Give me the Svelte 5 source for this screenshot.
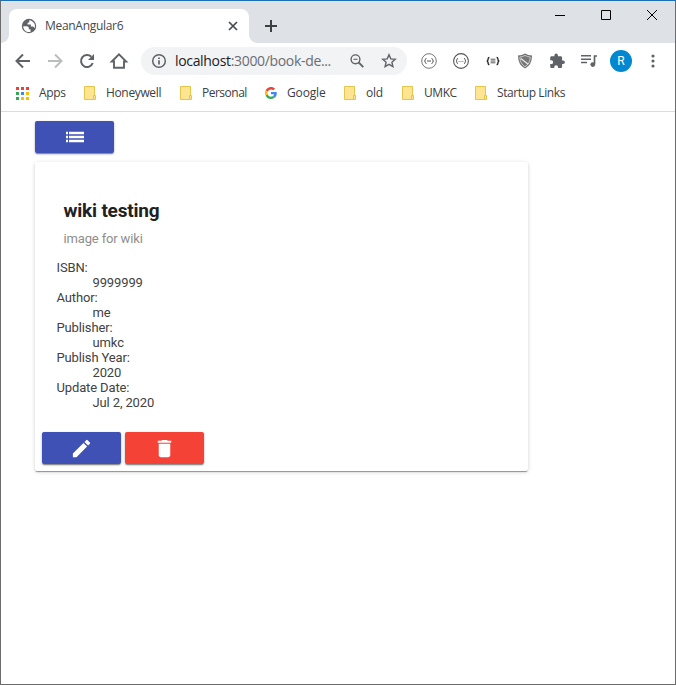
<script>
  const bookmarks = [
    { label: 'Apps', icon: 'apps', width: 68, spacing: -0.35 },
    { label: 'Honeywell', icon: 'folder', width: 96, spacing: -0.35 },
    { label: 'Personal', icon: 'folder', width: 85, spacing: -0.5 },
    { label: 'Google', icon: 'google', width: 79, spacing: -0.15 },
    { label: 'old', icon: 'folder', width: 58, spacing: -0.2 },
    { label: 'UMKC', icon: 'folder', width: 73, spacing: -0.45 },
    { label: 'Startup Links', icon: 'folder', width: 100, spacing: -0.4 }
  ];
  const dots = ['#ea4335', '#ea4335', '#ea4335', '#34a853', '#4285f4', '#fbbc05', '#34a853', '#fbbc05', '#fbbc05'];
  const details = [
    ['ISBN:', '9999999'],
    ['Author:', 'me'],
    ['Publisher:', 'umkc'],
    ['Publish Year:', '2020'],
    ['Update Date:', 'Jul 2, 2020']
  ];
</script>

<div class="window">
  <header class="titlebar">
    <div class="tab">
      <svg class="globe" width="16" height="16" viewBox="0 0 16 16">
        <circle cx="8" cy="8" r="7.2" fill="#5f6368" />
        <path d="M2.2 8.2h3.400c1.500 0 2.200.9 2.200 1.900v1.200h1.700v2.600c-3.600.9-7.100-1.700-7.300-5.700z" fill="#fff" />
        <path d="M8.300 2.200v1.200c0 1-.8 1.400-1.700 1.400v1.700h3.300v2h2.200l1.700 1.600c1-3.900-1.300-7.400-5.500-7.900z" fill="#fff" />
      </svg>
      <span class="tabname">MeanAngular6</span>
      <svg width="10" height="10" viewBox="0 0 10 10"><path d="M1 1l8 8M9 1l-8 8" stroke="#45494d" stroke-width="1.7" /></svg>
    </div>
    <svg class="plus" width="14" height="14" viewBox="0 0 14 14"><path d="M7 1v12M1 7h12" stroke="#3c4043" stroke-width="2" /></svg>
    <div class="controls">
      <svg width="46" height="28" viewBox="0 0 46 28"><path d="M18 14.500h10" stroke="#000" /></svg>
      <svg width="46" height="28" viewBox="0 0 46 28"><path d="M18.500 9.500h9v9h-9z" stroke="#000" fill="none" /></svg>
      <svg width="46" height="28" viewBox="0 0 46 28"><path d="M18 9l10 10M28 9l-10 10" stroke="#000" /></svg>
    </div>
  </header>

  <nav class="toolbar">
    <svg class="tool" viewBox="-16 -16 32 32"><path d="M7 0H-6M0-6.500L-6.500 0 0 6.500" stroke="#5f6368" stroke-width="2" fill="none" /></svg>
    <svg class="tool" viewBox="-16 -16 32 32"><path d="M-7 0H6M0-6.500L6.500 0 0 6.500" stroke="#babcbe" stroke-width="2" fill="none" /></svg>
    <svg class="tool" viewBox="-16 -16 32 32"><path d="M5.700 2A6 6 0 1 1 4.300-4.200" stroke="#5f6368" stroke-width="2" fill="none" /><path d="M7-7v6H1z" fill="#5f6368" /></svg>
    <svg class="tool" viewBox="-16 -16 32 32"><path d="M-7.200.5L0-6.700 7.200.5H5v6.300H-5V.5z" stroke="#5f6368" stroke-width="1.900" fill="none" /></svg>
    <div class="address">
      <svg width="16" height="16" viewBox="-8 -8 16 16"><circle r="6.300" fill="none" stroke="#5f6368" stroke-width="1.500" /><path d="M0-3.600v1.600M0-.8v4.300" stroke="#5f6368" stroke-width="1.700" /></svg>
      <span class="url"><b>localhost</b>:3000/book-de...</span>
      <svg width="16" height="16" viewBox="-8 -8 16 16"><circle cx="-1.500" cy="-1.700" r="4.400" fill="none" stroke="#5f6368" stroke-width="1.400" /><path d="M1.700 1.500L6.300 6.100" stroke="#5f6368" stroke-width="1.800" /><path d="M-3.500-1.700h4" stroke="#5f6368" stroke-width="1.100" /></svg>
      <svg class="star" width="16" height="16" viewBox="-8 -8 16 16"><path d="M0-6.200l1.800 4.100 4.400.4-3.300 2.900 1 4.400L0 3.300l-3.900 2.300 1-4.400-3.300-2.900 4.400-.4z" fill="none" stroke="#5f6368" stroke-width="1.400" /></svg>
    </div>
    <svg class="tool" viewBox="-16 -16 32 32"><circle r="7.300" fill="#fff" stroke="#777" stroke-width="1" /><path d="M-2.500-2.500q-1.200 0-1.200 1.200Q-3.700 0-4.500 0q.8 0 .8 1.300Q-3.700 2.500-2.500 2.500M2.500-2.500q1.200 0 1.200 1.200Q3.700 0 4.500 0 3.700 0 3.700 1.300 3.700 2.500 2.500 2.500M-2 0h4" fill="none" stroke="#555" stroke-width="1" /></svg>
    <svg class="tool" viewBox="-16 -16 32 32"><circle r="7.400" fill="#fff" stroke="#555" stroke-width="1.100" /><path d="M-3-2.500q-1.200 0-1.200 1.200Q-4.200 0-5 0q.8 0 .8 1.300Q-4.200 2.500-3 2.500M3-2.500q1.200 0 1.200 1.200Q4.200 0 5 0 4.200 0 4.200 1.300 4.200 2.500 3 2.500" fill="none" stroke="#555" stroke-width="1" /><path d="M-2.500.5h1.200M-.6.5H.6M1.300.5h1.200" stroke="#999" /></svg>
    <svg class="tool" viewBox="-16 -16 32 32"><path d="M-3.600-3.500q-1.300 0-1.300 1.300Q-4.900 0-6.300 0q1.400 0 1.400 2.200 0 1.300 1.300 1.300M3.600-3.500q1.300 0 1.300 1.300Q4.900 0 6.300 0 4.900 0 4.900 2.200 4.900 3.500 3.600 3.500" fill="none" stroke="#222" stroke-width="1.300" /><path d="M-2.400-1.800h4.800M-2.400 0h4.800M-2.400 1.800h4.800" stroke="#444" stroke-width=".9" /></svg>
    <svg class="tool" viewBox="-16 -16 32 32"><path d="M0-7.500Q3-5.600 7-5.500 7 4 0 7.500-7 4-7-5.500-3-5.600 0-7.500z" fill="#707070" /><path d="M0-5.600Q2.500-4.200 5.200-4 5 3 0 5.700-5 3-5.200-4-2.500-4.200 0-5.600z" fill="#777" stroke="#ddd" stroke-width=".8" /><path d="M-4.200-2.500L3.200 3.300" stroke="#e8e8e8" stroke-width="1.300" /></svg>
    <svg class="tool" viewBox="-16 -16 32 32"><path transform="translate(-8.200 -8.300) scale(.7)" d="M20.500 11H19V7c0-1.100-.9-2-2-2h-4V3.500a2.500 2.500 0 0 0-5 0V5H4c-1.100 0-2 .9-2 2v3.800h1.500a2.700 2.700 0 0 1 0 5.400H2V20c0 1.100.9 2 2 2h3.800v-1.500a2.700 2.700 0 0 1 5.400 0V22H17c1.100 0 2-.9 2-2v-4h1.500a2.500 2.500 0 0 0 0-5z" fill="#5f6368" /></svg>
    <svg class="tool" viewBox="-16 -16 32 32"><path d="M-8-5.200H2M-8-1.800H2M-8 1.600h6" stroke="#5f6368" stroke-width="1.500" /><path d="M8-5H5.500v8" fill="none" stroke="#5f6368" stroke-width="1.700" /><circle cx="3.800" cy="3.600" r="2.400" fill="#5f6368" /></svg>
    <span class="tool avatar"><i>R</i></span>
    <svg class="tool" viewBox="-16 -16 32 32" fill="#5f6368"><circle cy="-5" r="1.600" /><circle r="1.600" /><circle cy="5" r="1.600" /></svg>
  </nav>

  <div class="bookmarks">
    {#each bookmarks as mark}
      <div class="bookmark" style:width="{mark.width}px">
        {#if mark.icon === 'apps'}
          <svg width="13" height="13" viewBox="0 0 13 13">
            {#each dots as color, i}<rect x={(i % 3) * 5} y={Math.floor(i / 3) * 5} width="3" height="3" fill={color} />{/each}
          </svg>
        {:else if mark.icon === 'google'}
          <svg width="12" height="12" viewBox="0 0 48 48">
            <path fill="#ea4335" d="M24 9.500c3.500 0 6.700 1.200 9.200 3.600l6.900-6.900C35.900 2.400 30.500 0 24 0 14.600 0 6.500 5.400 2.600 13.200l8 6.200C12.400 13.700 17.700 9.500 24 9.500z" />
            <path fill="#4285f4" d="M47 24.600c0-1.600-.2-3.100-.4-4.600H24v9h12.900c-.6 3-2.200 5.500-4.700 7.200l7.700 6C44.400 38 47 31.800 47 24.600z" />
            <path fill="#fbbc05" d="M10.500 28.600a14 14 0 0 1 0-9.200l-8-6.200a24 24 0 0 0 0 21.600z" />
            <path fill="#34a853" d="M24 48c6.500 0 11.900-2.100 15.900-5.800l-7.700-6c-2.200 1.500-4.900 2.300-8.200 2.300-6.300 0-11.600-4.200-13.500-9.900l-8 6.200C6.500 42.600 14.600 48 24 48z" />
          </svg>
        {:else}
          <svg width="12" height="14" viewBox="0 0 12 14"><path d="M.5.500h10v13H.5z" fill="#ffe592" stroke="#e6c54b" /><path d="M9.500 9.500h2v4h-2z" fill="#ffe592" stroke="#e6c54b" /></svg>
        {/if}
        <span style:letter-spacing="{mark.spacing}px">{mark.label}</span>
      </div>
    {/each}
  </div>

  <main>
    <button class="primary" aria-label="Book list">
      <svg width="20" height="20" viewBox="0 0 20 20"><path d="M1 6h2M4 6h15M1 10h2M4 10h15M1 14h2M4 14h15" stroke="#fff" stroke-width="2.300" /></svg>
    </button>
    <section class="card">
      <h2>wiki testing</h2>
      <p>image for wiki</p>
      <dl>
        {#each details as [term, value]}
          <dt>{term}</dt>
          <dd>{value}</dd>
        {/each}
      </dl>
      <div class="actions">
        <button class="primary" aria-label="Edit">
          <svg width="23" height="23" viewBox="0 0 24 24"><path fill="#fff" d="M3 17.250V21h3.750L17.810 9.940l-3.750-3.750L3 17.250zM20.710 7.040a1 1 0 0 0 0-1.410l-2.340-2.340a1 1 0 0 0-1.410 0l-1.830 1.830 3.750 3.750 1.830-1.830z" /></svg>
        </button>
        <button class="warn" aria-label="Delete">
          <svg width="23" height="23" viewBox="0 0 24 24"><path fill="#fff" d="M6 19c0 1.100.9 2 2 2h8c1.100 0 2-.9 2-2V7H6v12zM19 4h-3.500l-1-1h-5l-1 1H5v2h14V4z" /></svg>
        </button>
      </div>
    </section>
  </main>
</div>

<style>
  .window {
    box-sizing: border-box;
    width: 676px;
    height: 685px;
    display: flex;
    flex-direction: column;
    background: #fff;
    border: 1px solid #6b6b6b;
    border-top-color: #1b6fb5;
    font-family: "Open Sans", "Noto Sans", sans-serif;
    overflow: hidden;
  }
  svg { display: block; flex: none; }
  .titlebar {
    height: 42px;
    flex: none;
    display: flex;
    background: #dee1e6;
  }
  .tab {
    position: relative;
    box-sizing: border-box;
    width: 240px;
    height: 34px;
    margin: 8px 0 0 8px;
    padding: 0 11px 0 12px;
    display: flex;
    align-items: center;
    background: #fff;
    border-radius: 8px 8px 0 0;
  }
  .tab::before, .tab::after {
    content: "";
    position: absolute;
    bottom: 0;
    width: 8px;
    height: 8px;
  }
  .tab::before { left: -8px; background: radial-gradient(circle at 0 0, #dee1e6 7.5px, #fff 8px); }
  .tab::after { right: -8px; background: radial-gradient(circle at 100% 0, #dee1e6 7.5px, #fff 8px); }
  .tabname {
    flex: 1;
    margin-left: 8px;
    padding-bottom: 1px;
    font-size: 12px;
    letter-spacing: -0.3px;
    color: #45494d;
  }
  .plus { margin: 18px 0 0 15px; }
  .controls { display: flex; margin-left: auto; }
  .toolbar {
    height: 36px;
    flex: none;
    display: flex;
    align-items: center;
    padding-left: 6px;
  }
  .tool { width: 32px; height: 32px; flex: none; }
  .address {
    box-sizing: border-box;
    width: 266px;
    height: 28px;
    margin: 0 6px;
    padding: 0 10px;
    display: flex;
    align-items: center;
    border-radius: 14px;
    background: #f1f3f4;
  }
  .url {
    flex: 1;
    margin-left: 8px;
    padding-bottom: 1px;
    font-size: 14px;
    letter-spacing: -0.33px;
    white-space: nowrap;
    color: #6a6e73;
  }
  .url b { font-weight: 400; color: #202124; }
  .star { margin-left: 16px; }
  .avatar { display: flex; align-items: center; justify-content: center; }
  .avatar i {
    width: 22px;
    height: 22px;
    border-radius: 50%;
    background: #0288d1;
    color: #fff;
    font: 12px/22px Roboto, sans-serif;
    text-align: center;
  }
  .bookmarks {
    height: 32px;
    flex: none;
    box-sizing: content-box;
    display: flex;
    padding-left: 15px;
    border-bottom: 1px solid #dadce0;
  }
  .bookmark {
    flex: none;
    display: flex;
    align-items: center;
    gap: 10px;
    height: 28px;
    font-size: 12px;
    color: #3c4043;
    white-space: nowrap;
  }
  .bookmark span { padding-bottom: 2px; }
  main {
    padding: 9px 0 0 34px;
    font-family: Roboto, sans-serif;
  }
  button {
    width: 79px;
    height: 32px;
    padding: 0;
    border: 0;
    border-radius: 2px;
    display: flex;
    align-items: center;
    justify-content: center;
    box-shadow: 0 2px 1px -1px rgba(0, 0, 0, .3), 0 1px 2px rgba(0, 0, 0, .2), 0 1px 3px rgba(0, 0, 0, .15);
  }
  .primary { background: #3f51b5; }
  .warn { background: #f44336; }
  .card {
    box-sizing: border-box;
    width: 493px;
    height: 309px;
    margin-top: 9px;
    padding: 36px 7px 7px;
    display: flex;
    flex-direction: column;
    border-radius: 2px;
    background: #fff;
    box-shadow: 0 2px 1px -1px rgba(0, 0, 0, .25), 0 1px 1px rgba(0, 0, 0, .16), 0 1px 4px rgba(0, 0, 0, .16);
  }
  h2 {
    margin: 0 0 0 21.500px;
    font-size: 19px;
    line-height: 26px;
    font-weight: 700;
    letter-spacing: -0.2px;
    color: #212121;
  }
  p {
    margin: 6px 0 0 21.500px;
    font-size: 13px;
    line-height: 18px;
    letter-spacing: -0.15px;
    color: #8e8e8e;
  }
  dl {
    margin: 12px 0 0 14.500px;
    font-size: 13px;
    line-height: 15px;
    letter-spacing: -0.13px;
    color: #424242;
  }
  dd { margin: 0 0 0 36px; }
  .actions { display: flex; gap: 4px; margin-top: auto; }
</style>
